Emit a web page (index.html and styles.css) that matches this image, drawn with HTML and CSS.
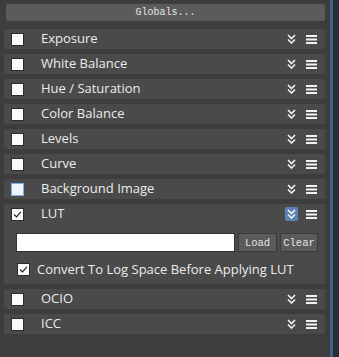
FILE: index.html
```html
<!DOCTYPE html>
<html lang="en">
<head>
  <meta charset="UTF-8" />
  <title>Globals</title>
  <link rel="stylesheet" href="styles.css">
</head>
<body>
<div class="wrap">
  <div class="panel">
    <button class="globals">Globals...</button>

    <div class="row"><span class="box"></span><span class="label">Exposure</span><span class="icons"><svg class="chev" viewBox="0 0 9 10"><path d="M1 1l3.5 3.5L8 1M1 5.5L4.5 9 8 5.5"/></svg><svg class="menu" viewBox="0 0 11 9"><rect y="0" width="11" height="2"/><rect y="3.5" width="11" height="2"/><rect y="7" width="11" height="2"/></svg></span></div>
    <div class="row"><span class="box"></span><span class="label">White Balance</span><span class="icons"><svg class="chev" viewBox="0 0 9 10"><path d="M1 1l3.5 3.5L8 1M1 5.5L4.5 9 8 5.5"/></svg><svg class="menu" viewBox="0 0 11 9"><rect y="0" width="11" height="2"/><rect y="3.5" width="11" height="2"/><rect y="7" width="11" height="2"/></svg></span></div>
    <div class="row"><span class="box"></span><span class="label">Hue / Saturation</span><span class="icons"><svg class="chev" viewBox="0 0 9 10"><path d="M1 1l3.5 3.5L8 1M1 5.5L4.5 9 8 5.5"/></svg><svg class="menu" viewBox="0 0 11 9"><rect y="0" width="11" height="2"/><rect y="3.5" width="11" height="2"/><rect y="7" width="11" height="2"/></svg></span></div>
    <div class="row"><span class="box"></span><span class="label">Color Balance</span><span class="icons"><svg class="chev" viewBox="0 0 9 10"><path d="M1 1l3.5 3.5L8 1M1 5.5L4.5 9 8 5.5"/></svg><svg class="menu" viewBox="0 0 11 9"><rect y="0" width="11" height="2"/><rect y="3.5" width="11" height="2"/><rect y="7" width="11" height="2"/></svg></span></div>
    <div class="row"><span class="box"></span><span class="label">Levels</span><span class="icons"><svg class="chev" viewBox="0 0 9 10"><path d="M1 1l3.5 3.5L8 1M1 5.5L4.5 9 8 5.5"/></svg><svg class="menu" viewBox="0 0 11 9"><rect y="0" width="11" height="2"/><rect y="3.5" width="11" height="2"/><rect y="7" width="11" height="2"/></svg></span></div>
    <div class="row"><span class="box"></span><span class="label">Curve</span><span class="icons"><svg class="chev" viewBox="0 0 9 10"><path d="M1 1l3.5 3.5L8 1M1 5.5L4.5 9 8 5.5"/></svg><svg class="menu" viewBox="0 0 11 9"><rect y="0" width="11" height="2"/><rect y="3.5" width="11" height="2"/><rect y="7" width="11" height="2"/></svg></span></div>
    <div class="row"><span class="box hover"></span><span class="label">Background Image</span><span class="icons"><svg class="chev" viewBox="0 0 9 10"><path d="M1 1l3.5 3.5L8 1M1 5.5L4.5 9 8 5.5"/></svg><svg class="menu" viewBox="0 0 11 9"><rect y="0" width="11" height="2"/><rect y="3.5" width="11" height="2"/><rect y="7" width="11" height="2"/></svg></span></div>

    <div class="group">
      <div class="row"><span class="box checked"><svg viewBox="0 0 13 13"><path d="M2.5 6.5l2.8 2.8L10.5 3.5"/></svg></span><span class="label">LUT</span><span class="icons"><span class="chev-btn"><svg class="chev" viewBox="0 0 9 10"><path d="M1 1l3.5 3.5L8 1M1 5.5L4.5 9 8 5.5"/></svg></span><svg class="menu" viewBox="0 0 11 9"><rect y="0" width="11" height="2"/><rect y="3.5" width="11" height="2"/><rect y="7" width="11" height="2"/></svg></span></div>
      <div class="lut-file">
        <input type="text" class="path" />
        <button class="small load">Load</button>
        <button class="small clear">Clear</button>
      </div>
      <label class="option"><span class="box small-box checked"><svg viewBox="0 0 13 13"><path d="M2.5 6.5l2.8 2.8L10.5 3.5"/></svg></span>Convert To Log Space Before Applying LUT</label>
    </div>

    <div class="row"><span class="box"></span><span class="label">OCIO</span><span class="icons"><svg class="chev" viewBox="0 0 9 10"><path d="M1 1l3.5 3.5L8 1M1 5.5L4.5 9 8 5.5"/></svg><svg class="menu" viewBox="0 0 11 9"><rect y="0" width="11" height="2"/><rect y="3.5" width="11" height="2"/><rect y="7" width="11" height="2"/></svg></span></div>
    <div class="row"><span class="box"></span><span class="label">ICC</span><span class="icons"><svg class="chev" viewBox="0 0 9 10"><path d="M1 1l3.5 3.5L8 1M1 5.5L4.5 9 8 5.5"/></svg><svg class="menu" viewBox="0 0 11 9"><rect y="0" width="11" height="2"/><rect y="3.5" width="11" height="2"/><rect y="7" width="11" height="2"/></svg></span></div>
  </div>
  <div class="edge"></div>
</div>
</body>
</html>
```

FILE: styles.css
```css
html, body {
  margin: 0;
  height: 100%;
}
body {
  background: #3c3c3c;
  font-family: "Open Sans", "Liberation Sans", sans-serif;
  font-size: 13px;
  color: #ececec;
  overflow: hidden;
}
.wrap {
  display: flex;
  height: 357px;
}
.panel {
  width: 324px;
  padding: 4px 5px 0 4px;
  display: flex;
  flex-direction: column;
  background: #3d3d3d;
}
.edge {
  width: 6px;
  background: #2a2e35;
  border-left: 3px solid #3f6189;
}
.globals {
  margin: 0 0 8px 2px;
  height: 17px;
  padding: 0;
  border: none;
  border-radius: 2px;
  background: #5b5b5b;
  color: #e4e4e4;
  font-family: "Liberation Mono", monospace;
  font-size: 10px;
}
.row {
  display: flex;
  align-items: center;
  height: 20px;
  margin-bottom: 5px;
  background: #4a4a4a;
  border-radius: 2px;
  line-height: 18px;
}
.row .label {
  position: relative;
  top: -1px;
}
.box {
  width: 11px;
  height: 11px;
  margin-left: 7px;
  background: #fafafa;
  border: 1px solid #2c2c2c;
  display: flex;
  align-items: center;
  justify-content: center;
}
.box.hover {
  border-color: #7fb0e0;
  background: #eef4fb;
}
.box svg {
  width: 11px;
  height: 11px;
  fill: none;
  stroke: #222;
  stroke-width: 1.4;
}
.label {
  margin-left: 17px;
  flex: 1;
}
.icons {
  display: flex;
  align-items: center;
  margin-right: 8px;
}
.chev {
  width: 9px;
  height: 10px;
  fill: none;
  stroke: #f2f2f2;
  stroke-width: 1.6;
}
.chev-btn {
  width: 13px;
  height: 14px;
  margin-right: -2px;
  margin-left: -2px;
  border-radius: 2px;
  background: #5a82b8;
  display: flex;
  align-items: center;
  justify-content: center;
}
.menu {
  width: 11px;
  height: 9px;
  margin-left: 10px;
  fill: #f2f2f2;
}
.group {
  background: #4a4a4a;
  border-radius: 2px;
  margin-bottom: 5px;
  height: 80px;
}
.group .row {
  margin-bottom: 0;
}
.lut-file {
  display: flex;
  align-items: center;
  margin: 9px 0 0 12px;
}
.path {
  width: 217px;
  height: 17px;
  padding: 0;
  border: 1px solid #333;
  background: #fff;
}
.small {
  height: 19px;
  margin-left: 3px;
  padding: 0;
  border: 1px solid #3a3a3a;
  background: #5b5b5b;
  color: #e4e4e4;
  font-family: "Liberation Mono", monospace;
  font-size: 10.5px;
}
.load {
  width: 39px;
}
.clear {
  width: 38px;
}
.option {
  display: flex;
  align-items: center;
  margin: 8px 0 0 6px;
}
.option .box {
  margin-right: 7px;
}
```
